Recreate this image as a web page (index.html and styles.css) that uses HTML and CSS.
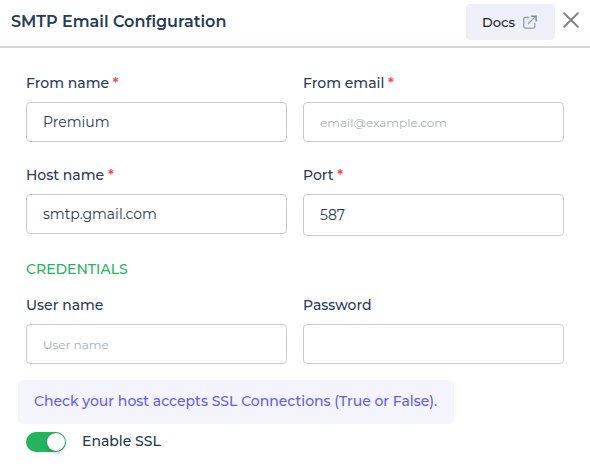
FILE: index.html
```html
<!DOCTYPE html>
<html lang="en">
<head>
<meta charset="utf-8">
<title>SMTP Email Configuration</title>
<link rel="stylesheet" href="styles.css">
</head>
<body>
<header class="header">
  <h1 class="title">SMTP Email Configuration</h1>
  <button class="docs" type="button"><span>Docs</span>
    <svg class="docs-icon" viewBox="0 0 14 14" width="14" height="14"><path d="M5.5 2.5H2.2Q.8 2.5 .8 3.9v7.8q0 1.4 1.4 1.4h8.1q1.4 0 1.4-1.4V8.2M5.2 8.8 12.5 1.5"/><path class="tip" d="M8.4 1.2h4.7v4.7"/></svg>
  </button>
  <button class="close" type="button" aria-label="Close"><svg viewBox="0 0 16 16" width="16" height="16"><path d="M1.2 1.2 14.8 14.8M14.8 1.2 1.2 14.8"/></svg></button>
</header>
<main class="form">
  <div class="row">
    <label class="field"><span class="label">From name <b class="req">*</b></span><input class="input" type="text" value="Premium"></label>
    <label class="field"><span class="label">From email <b class="req">*</b></span><input class="input" type="text" placeholder="email@example.com"></label>
  </div>
  <div class="row row-host">
    <label class="field"><span class="label">Host name <b class="req">*</b></span><input class="input" type="text" value="smtp.gmail.com"></label>
    <label class="field"><span class="label">Port <b class="req">*</b></span><input class="input tall" type="text" value="587"></label>
  </div>
  <h2 class="section">CREDENTIALS</h2>
  <div class="row">
    <label class="field"><span class="label">User name</span><input class="input" type="text" placeholder="User name"></label>
    <label class="field"><span class="label">Password</span><input class="input" type="password"></label>
  </div>
  <p class="note">Check your host accepts SSL Connections (True or False).</p>
  <div class="ssl"><span class="switch"><span class="knob"></span></span><span class="ssl-label">Enable SSL</span></div>
</main>
</body>
</html>
```
FILE: styles.css
```css
* { box-sizing: border-box; }
body { margin: 0; height: 467px; overflow: hidden; background: #fff; color: #253b58; font-family: Montserrat, Inter, sans-serif; font-size: 14px; }
button { border: 0; padding: 0; font: inherit; }
.header { display: flex; height: 48px; padding: 4px 11px 0; border-bottom: 2px solid #d3d8d7; }
.title { margin: 0; flex: 1; font-size: 16px; line-height: 35px; font-weight: 600; white-space: nowrap; }
.docs { display: flex; align-items: center; gap: 8px; width: 89px; height: 36px; padding: 0 16px; border-radius: 4px; background: #edf0f9; color: #222; font-size: 13px; line-height: 16px; font-weight: 500; }
.docs span { width: 33px; margin-top: -1px; }
.docs-icon { flex: none; fill: none; stroke: #8fa0a7; stroke-width: 1.3; stroke-linecap: round; }
.tip { stroke: #7c8f97; stroke-width: 1.5; }
.close { width: 16px; height: 16px; margin: 8px 0 0 8px; background: none; }
.close svg { display: block; fill: none; stroke: #858585; stroke-width: 2; stroke-linecap: round; }
.form { padding: 25px 26px 0; }
.row { display: grid; grid-template-columns: 261px 261px; gap: 16px; align-items: start; }
.row-host { margin-top: 23px; }
.field { display: block; }
.label { display: block; height: 29px; line-height: 20px; font-weight: 500; white-space: nowrap; }
.req { color: #ff4545; font-weight: 600; }
.input { display: block; width: 261px; height: 40px; margin: 0; padding: 0 16px; border: 1px solid #c9c8d5; border-radius: 4px; background: #fff; color: #253b58; font: inherit; outline: 0; }
.input::placeholder { color: #a5afbb; font-size: 12px; opacity: 1; }
.tall { height: 42px; }
.section { margin: 23px 0 16px; color: #24b45d; font-size: 14px; line-height: 20px; font-weight: 500; }
.note { width: 436px; height: 44px; margin: 16px 0 8px -8px; padding: 0 16px; border-radius: 5px; background: #f4f4ff; color: #615df5; line-height: 42px; font-weight: 500; white-space: nowrap; }
.ssl { display: flex; gap: 16px; height: 20px; }
.switch { width: 40px; height: 20px; padding: 1px; border-radius: 10px; background: #24b45d; }
.knob { display: block; width: 18px; height: 18px; margin-left: 20px; border-radius: 50%; background: #fff; box-shadow: 0 2px 4px rgba(0,35,11,.2); }
.ssl-label { color: #233746; line-height: 18px; font-weight: 500; }
```
